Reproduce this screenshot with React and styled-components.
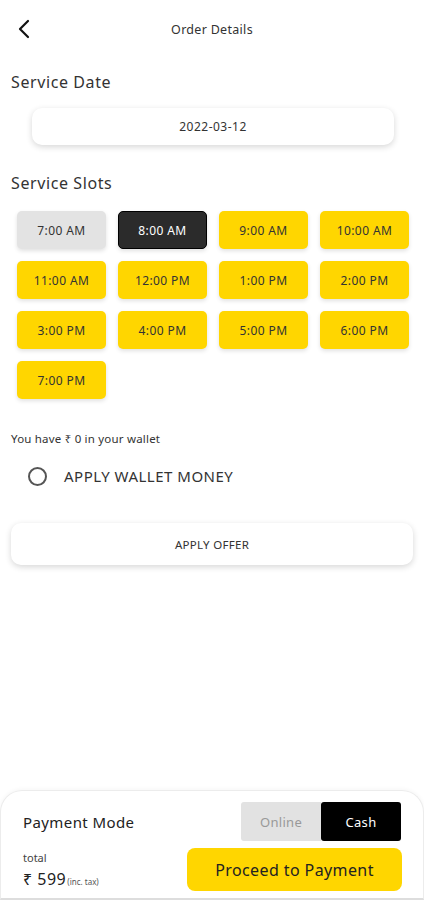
import { useState } from "react";
import styled, { createGlobalStyle } from "styled-components";

const GlobalStyle = createGlobalStyle`
  * { box-sizing: border-box; }
  body {
    margin: 0;
    background: #ffffff;
    font-family: "Noto Sans", "DejaVu Sans", sans-serif;
    color: #222;
  }
`;

const Page = styled.div`
  width: 424px;
  height: 900px;
  display: flex;
  flex-direction: column;
  background: #fff;
  overflow: hidden;
`;

const Header = styled.div`
  height: 58px;
  display: flex;
  align-items: center;
  justify-content: center;
  position: relative;
`;

const BackButton = styled.button`
  position: absolute;
  left: 12px;
  top: 17px;
  width: 24px;
  height: 24px;
  padding: 0;
  border: none;
  background: none;
  display: flex;
  align-items: center;
  justify-content: center;
`;

const Title = styled.div`
  font-size: 12.5px;
  letter-spacing: 0.3px;
  color: #333;
`;

const Content = styled.div`
  flex: 1;
  padding: 0 11px;
  display: flex;
  flex-direction: column;
`;

const SectionLabel = styled.div`
  font-size: 16px;
  letter-spacing: 0.6px;
  color: #333;
  margin-top: ${(p) => p.top || 0}px;
  line-height: 20px;
`;

const DateBox = styled.div`
  margin: 16px 19px 0 21px;
  height: 37px;
  border-radius: 10px;
  background: #fff;
  box-shadow: 0 2px 6px rgba(0, 0, 0, 0.16);
  display: flex;
  align-items: center;
  justify-content: center;
  font-size: 12px;
  letter-spacing: 0.5px;
  color: #333;
`;

const SlotGrid = styled.div`
  margin: 18px 5px 0 6px;
  display: grid;
  grid-template-columns: repeat(4, 89px);
  column-gap: 12px;
  row-gap: 12px;
`;

const Slot = styled.button`
  height: 38px;
  border-radius: 5px;
  font-family: inherit;
  font-size: 12px;
  letter-spacing: 0.4px;
  display: flex;
  align-items: center;
  justify-content: center;
  padding: 0;
  box-shadow: 0 2px 4px rgba(0, 0, 0, 0.12);
  background: ${(p) =>
    p.variant === "selected" ? "#2b2b2b" : p.variant === "disabled" ? "#e3e3e3" : "#ffd600"};
  color: ${(p) => (p.variant === "selected" ? "#fff" : "#333")};
  border: ${(p) => (p.variant === "selected" ? "1px solid #000" : "none")};
`;

const WalletText = styled.div`
  margin-top: 32px;
  font-size: 11.5px;
  letter-spacing: 0.2px;
  color: #333;
`;

const RadioRow = styled.label`
  display: flex;
  align-items: center;
  gap: 17px;
  margin: 20px 0 0 17px;
  font-size: 15px;
  letter-spacing: 0.5px;
  color: #333;
`;

const Radio = styled.span`
  width: 19px;
  height: 19px;
  border-radius: 50%;
  border: 2px solid #555;
`;

const OfferButton = styled.button`
  margin-top: 37px;
  height: 42px;
  width: 100%;
  border: none;
  border-radius: 10px;
  background: #fff;
  box-shadow: 0 2px 6px rgba(0, 0, 0, 0.16);
  font-family: inherit;
  font-size: 11.5px;
  letter-spacing: 0.3px;
  color: #333;
`;

const Footer = styled.div`
  height: 110px;
  border-top-left-radius: 22px;
  border-top-right-radius: 22px;
  border: 1px solid #ececec;
  border-bottom: 2px solid #ddd;
  box-shadow: 0 -1px 4px rgba(0, 0, 0, 0.04);
  padding: 11px 21px 0 22px;
  display: grid;
  grid-template-columns: 1fr auto;
  align-content: start;
  row-gap: 7px;
`;

const FooterLabel = styled.div`
  font-size: 15px;
  letter-spacing: 0.4px;
  color: #222;
  align-self: center;
`;

const Toggle = styled.div`
  justify-self: end;
  display: flex;
  height: 39px;
  margin-right: 1px;
`;

const ToggleOption = styled.button`
  width: 80px;
  border: none;
  font-family: inherit;
  font-size: 13px;
  letter-spacing: 0.3px;
  border-radius: ${(p) => (p.active ? "3px" : "3px 0 0 3px")};
  background: ${(p) => (p.active ? "#000" : "#e2e2e2")};
  color: ${(p) => (p.active ? "#fff" : "#999")};
`;

const Total = styled.div`
  display: flex;
  flex-direction: column;
  justify-content: center;
  gap: 3px;
`;

const TotalLabel = styled.div`
  font-size: 11px;
  color: #444;
`;

const Amount = styled.div`
  font-size: 16px;
  letter-spacing: 0.5px;
  color: #222;
  display: flex;
  align-items: baseline;
`;

const Tax = styled.span`
  font-size: 8px;
  letter-spacing: 0;
  color: #555;
  margin-left: 1px;
`;

const ProceedButton = styled.button`
  width: 215px;
  height: 43px;
  border: none;
  border-radius: 8px;
  background: #ffd600;
  font-family: inherit;
  font-size: 16px;
  letter-spacing: 0.4px;
  color: #222;
`;

const slots = [
  "7:00 AM", "8:00 AM", "9:00 AM", "10:00 AM",
  "11:00 AM", "12:00 PM", "1:00 PM", "2:00 PM",
  "3:00 PM", "4:00 PM", "5:00 PM", "6:00 PM",
  "7:00 PM",
];

export default function App() {
  const [selected, setSelected] = useState("8:00 AM");
  const [mode, setMode] = useState("Cash");

  return (
    <Page>
      <GlobalStyle />
      <Header>
        <BackButton>
          <svg width="16" height="20" viewBox="0 0 16 20" fill="none">
            <path d="M12 2 L4 10 L12 18" stroke="#111" strokeWidth="2.2" strokeLinecap="round" strokeLinejoin="round" />
          </svg>
        </BackButton>
        <Title>Order Details</Title>
      </Header>
      <Content>
        <SectionLabel top={14}>Service Date</SectionLabel>
        <DateBox>2022-03-12</DateBox>
        <SectionLabel top={28}>Service Slots</SectionLabel>
        <SlotGrid>
          {slots.map((s, i) => (
            <Slot
              key={s}
              variant={i === 0 ? "disabled" : s === selected ? "selected" : "open"}
              onClick={() => i !== 0 && setSelected(s)}
            >
              {s}
            </Slot>
          ))}
        </SlotGrid>
        <WalletText>You have ₹ 0 in your wallet</WalletText>
        <RadioRow>
          <Radio />
          APPLY WALLET MONEY
        </RadioRow>
        <OfferButton>APPLY OFFER</OfferButton>
      </Content>
      <Footer>
        <FooterLabel>Payment Mode</FooterLabel>
        <Toggle>
          {["Online", "Cash"].map((m) => (
            <ToggleOption key={m} active={mode === m} onClick={() => setMode(m)}>
              {m}
            </ToggleOption>
          ))}
        </Toggle>
        <Total>
          <TotalLabel>total</TotalLabel>
          <Amount>
            ₹ 599<Tax>(inc. tax)</Tax>
          </Amount>
        </Total>
        <ProceedButton>Proceed to Payment</ProceedButton>
      </Footer>
    </Page>
  );
}
